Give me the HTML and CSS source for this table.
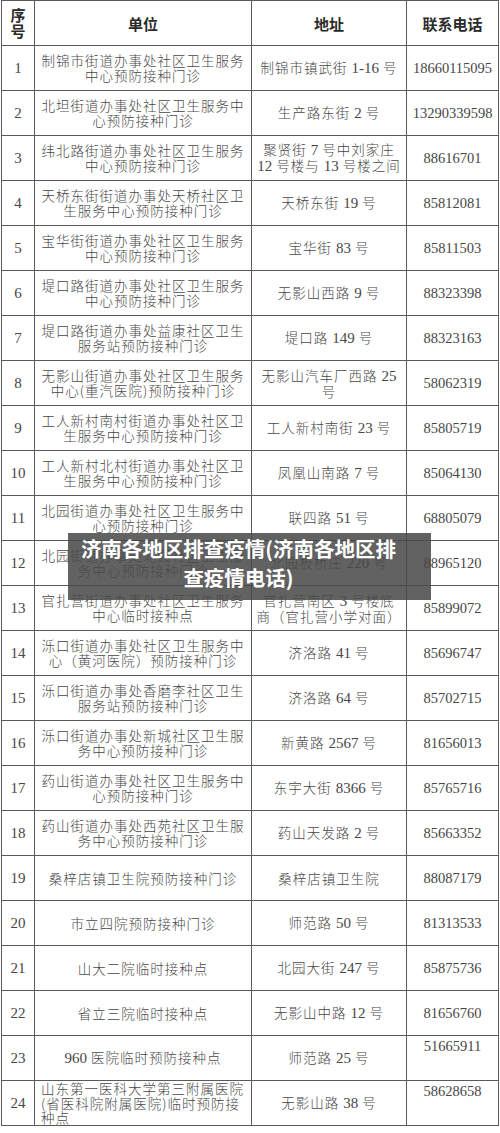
FILE: index.html
```html
<!DOCTYPE html>
<html lang="zh-CN">
<head>
<meta charset="utf-8">
<title>济南各地区排查疫情</title>
<link rel="stylesheet" href="styles.css">
</head>
<body>
<div class="page">
<table class="grid">
  <colgroup>
    <col class="c-no"><col class="c-unit"><col class="c-addr"><col class="c-tel">
  </colgroup>
  <thead>
    <tr><th class="no">序<br>号</th><th>单位</th><th>地址</th><th>联系电话</th></tr>
  </thead>
  <tbody>
    <tr><td class="no">1</td><td>制锦市街道办事处社区卫生服务<br>中心预防接种门诊</td><td>制锦市镇武街 <span class="n">1-16</span> 号</td><td class="tel">18660115095</td></tr>
    <tr><td class="no">2</td><td>北坦街道办事处社区卫生服务中<br>心预防接种门诊</td><td>生产路东街 <span class="n">2</span> 号</td><td class="tel">13290339598</td></tr>
    <tr><td class="no">3</td><td>纬北路街道办事处社区卫生服务<br>中心预防接种门诊</td><td>聚贤街 <span class="n">7</span> 号中刘家庄<br><span class="n">12</span> 号楼与 <span class="n">13</span> 号楼之间</td><td class="tel">88616701</td></tr>
    <tr><td class="no">4</td><td>天桥东街街道办事处天桥社区卫<br>生服务中心预防接种门诊</td><td>天桥东街 <span class="n">19</span> 号</td><td class="tel">85812081</td></tr>
    <tr><td class="no">5</td><td>宝华街街道办事处社区卫生服务<br>中心预防接种门诊</td><td>宝华街 <span class="n">83</span> 号</td><td class="tel">85811503</td></tr>
    <tr><td class="no">6</td><td>堤口路街道办事处社区卫生服务<br>中心预防接种门诊</td><td>无影山西路 <span class="n">9</span> 号</td><td class="tel">88323398</td></tr>
    <tr><td class="no">7</td><td>堤口路街道办事处益康社区卫生<br>服务站预防接种门诊</td><td>堤口路 <span class="n">149</span> 号</td><td class="tel">88323163</td></tr>
    <tr><td class="no">8</td><td>无影山街道办事处社区卫生服务<br>中心(重汽医院)预防接种门诊</td><td>无影山汽车厂西路 <span class="n">25</span><br>号</td><td class="tel">58062319</td></tr>
    <tr><td class="no">9</td><td>工人新村南村街道办事处社区卫<br>生服务中心预防接种门诊</td><td>工人新村南街 <span class="n">23</span> 号</td><td class="tel">85805719</td></tr>
    <tr><td class="no">10</td><td>工人新村北村街道办事处社区卫<br>生服务中心预防接种门诊</td><td>凤凰山南路 <span class="n">7</span> 号</td><td class="tel">85064130</td></tr>
    <tr><td class="no">11</td><td>北园街道办事处社区卫生服务中<br>心预防接种门诊</td><td>联四路 <span class="n">51</span> 号</td><td class="tel">68805079</td></tr>
    <tr><td class="no">12</td><td>北园街道办事处北园社区卫生服<br>务中心预防接种门诊</td><td>北园板桥庄 <span class="n">220</span> 号</td><td class="tel">88965120</td></tr>
    <tr><td class="no">13</td><td>官扎营街道办事处社区卫生服务<br>中心临时接种点</td><td>官扎营南区 <span class="n">3</span> 号楼底<br>商（官扎营小学对面）</td><td class="tel">85899072</td></tr>
    <tr><td class="no">14</td><td>泺口街道办事处社区卫生服务中<br>心（黄河医院）预防接种门诊</td><td>济洛路 <span class="n">41</span> 号</td><td class="tel">85696747</td></tr>
    <tr><td class="no">15</td><td>泺口街道办事处香磨李社区卫生<br>服务站预防接种门诊</td><td>济洛路 <span class="n">64</span> 号</td><td class="tel">85702715</td></tr>
    <tr><td class="no">16</td><td>泺口街道办事处新城社区卫生服<br>务中心预防接种门诊</td><td>新黄路 <span class="n">2567</span> 号</td><td class="tel">81656013</td></tr>
    <tr><td class="no">17</td><td>药山街道办事处社区卫生服务中<br>心预防接种门诊</td><td>东宇大街 <span class="n">8366</span> 号</td><td class="tel">85765716</td></tr>
    <tr><td class="no">18</td><td>药山街道办事处西苑社区卫生服<br>务中心预防接种门诊</td><td>药山天发路 <span class="n">2</span> 号</td><td class="tel">85663352</td></tr>
    <tr><td class="no">19</td><td>桑梓店镇卫生院预防接种门诊</td><td>桑梓店镇卫生院</td><td class="tel">88087179</td></tr>
    <tr><td class="no">20</td><td>市立四院预防接种门诊</td><td>师范路 <span class="n">50</span> 号</td><td class="tel">81313533</td></tr>
    <tr><td class="no">21</td><td>山大二院临时接种点</td><td>北园大街 <span class="n">247</span> 号</td><td class="tel">85875736</td></tr>
    <tr><td class="no">22</td><td>省立三院临时接种点</td><td>无影山中路 <span class="n">12</span> 号</td><td class="tel">81656760</td></tr>
    <tr><td class="no">23</td><td><span class="n">960</span> 医院临时预防接种点</td><td>师范路 <span class="n">25</span> 号</td><td class="tel top">51665911</td></tr>
    <tr><td class="no">24</td><td class="left">山东第一医科大学第三附属医院<br>(省医科院附属医院)临时预防接<br>种点</td><td>无影山路 <span class="n">38</span> 号</td><td class="tel top">58628658</td></tr>
  </tbody>
</table>
<div class="banner">济南各地区排查疫情(济南各地区排<br>查疫情电话)</div>
</div>
</body>
</html>
```

FILE: styles.css
```css
html, body {
  margin: 0;
  padding: 0;
  background: #ffffff;
}

.page {
  position: relative;
  width: 500px;
  height: 1133px;
  padding: 0 0 0 1px;
  box-sizing: border-box;
  overflow: hidden;
}

.grid {
  border-collapse: collapse;
  table-layout: fixed;
  width: 497px;
  color: #474747;
  font-family: "Noto Sans CJK SC", "Liberation Serif", serif;
  font-weight: 300;
  font-size: 13.5px;
  line-height: 15px;
  letter-spacing: 1px;
}

.c-no { width: 33px; }
.c-unit { width: 217px; }
.c-addr { width: 155px; }
.c-tel { width: 92px; }

.grid tr {
  height: 45px;
}

.grid th,
.grid td {
  border: 1px solid #5a5a5a;
  padding: 0 2px;
  text-align: center;
  vertical-align: middle;
  overflow: hidden;
  white-space: nowrap;
}

.grid th {
  font-weight: 700;
  font-size: 15px;
  color: #2a2a2a;
  letter-spacing: 0;
}

.grid th.no {
  line-height: 16px;
  padding: 0;
}

.grid td.no {
  font-family: "Liberation Serif", serif;
  font-weight: 400;
  font-size: 15px;
  letter-spacing: 0;
  padding: 0;
}

.grid td.tel {
  font-family: "Liberation Serif", serif;
  font-weight: 400;
  font-size: 14.5px;
  letter-spacing: 0;
  padding: 0;
}

.grid td.top {
  vertical-align: top;
  padding-top: 3px;
}

.grid td.left {
  text-align: left;
  vertical-align: middle;
  line-height: 14.5px;
  overflow: visible;
  padding: 0 0 0 6px;
}

.n {
  font-family: "Liberation Serif", serif;
  font-weight: 400;
  font-size: 15px;
  line-height: 1;
  letter-spacing: 0;
}

.banner {
  position: absolute;
  left: 68px;
  top: 533px;
  width: 363px;
  height: 67px;
  box-sizing: border-box;
  padding: 1px 22px 0 0;
  background: rgba(72, 72, 72, 0.86);
  color: #ffffff;
  font-family: "Noto Sans CJK SC", sans-serif;
  font-weight: 700;
  font-size: 20.5px;
  line-height: 29px;
  text-align: center;
  letter-spacing: 0;
}
```
